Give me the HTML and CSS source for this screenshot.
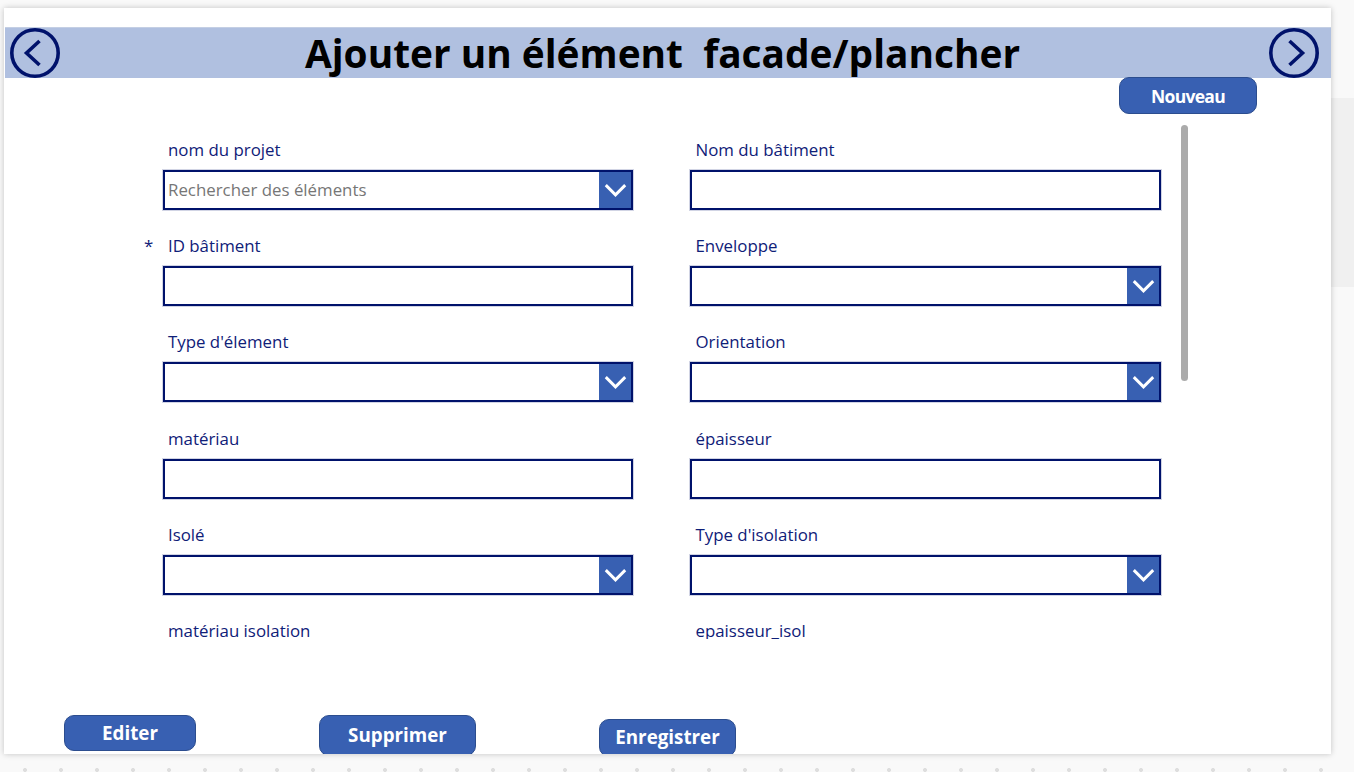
FILE: index.html
```html
<!DOCTYPE html>
<html lang="fr">
<head>
<meta charset="utf-8">
<title>Ajouter un élément facade/plancher</title>
<link rel="stylesheet" href="styles.css">
</head>
<body>
<div class="backdrop-panel"></div>
<div class="dots"></div>
<main class="canvas">
  <header class="titlebar">
    <button class="nav-btn" aria-label="Précédent">
      <svg viewBox="0 0 50 50" width="50" height="50"><circle cx="25" cy="25" r="23.2" class="ring"/><path d="M29.5 13 L16.5 25 L29.5 37" class="ring"/></svg>
    </button>
    <h1 class="title">Ajouter un élément  facade/plancher</h1>
    <button class="nav-btn" aria-label="Suivant">
      <svg viewBox="0 0 50 50" width="50" height="50"><circle cx="25" cy="25" r="23.2" class="ring"/><path d="M20.5 13 L33.5 25 L20.5 37" class="ring"/></svg>
    </button>
  </header>
  <div class="toolbar"><button class="btn btn-new">Nouveau</button></div>
  <section class="form">
    <div class="scrollbar"></div>
    <div class="field">
      <label class="label">nom du projet</label>
      <div class="control"><span class="placeholder">Rechercher des éléments</span><span class="chev"><svg viewBox="0 0 34 34" width="33" height="38"><path d="M7 12 L17 22 L27 12" class="chev-line"/></svg></span></div>
    </div>
    <div class="field field-right">
      <label class="label">Nom du bâtiment</label>
      <div class="control"></div>
    </div>
    <div class="field">
      <label class="label"><span class="star">*</span>ID bâtiment</label>
      <div class="control"></div>
    </div>
    <div class="field field-right">
      <label class="label">Enveloppe</label>
      <div class="control"><span class="chev"><svg viewBox="0 0 34 34" width="33" height="38"><path d="M7 12 L17 22 L27 12" class="chev-line"/></svg></span></div>
    </div>
    <div class="field">
      <label class="label">Type d'élement</label>
      <div class="control"><span class="chev"><svg viewBox="0 0 34 34" width="33" height="38"><path d="M7 12 L17 22 L27 12" class="chev-line"/></svg></span></div>
    </div>
    <div class="field field-right">
      <label class="label">Orientation</label>
      <div class="control"><span class="chev"><svg viewBox="0 0 34 34" width="33" height="38"><path d="M7 12 L17 22 L27 12" class="chev-line"/></svg></span></div>
    </div>
    <div class="field">
      <label class="label">matériau</label>
      <div class="control"></div>
    </div>
    <div class="field field-right">
      <label class="label">épaisseur</label>
      <div class="control"></div>
    </div>
    <div class="field">
      <label class="label">Isolé</label>
      <div class="control"><span class="chev"><svg viewBox="0 0 34 34" width="33" height="38"><path d="M7 12 L17 22 L27 12" class="chev-line"/></svg></span></div>
    </div>
    <div class="field field-right">
      <label class="label">Type d'isolation</label>
      <div class="control"><span class="chev"><svg viewBox="0 0 34 34" width="33" height="38"><path d="M7 12 L17 22 L27 12" class="chev-line"/></svg></span></div>
    </div>
    <div class="field">
      <label class="label">matériau isolation</label>
      <div class="control"></div>
    </div>
    <div class="field field-right">
      <label class="label">epaisseur_isol</label>
      <div class="control"></div>
    </div>
  </section>
  <footer class="actions">
    <button class="btn btn-edit">Editer</button>
    <button class="btn btn-delete">Supprimer</button>
    <button class="btn btn-save">Enregistrer</button>
  </footer>
</main>
</body>
</html>
```
FILE: styles.css
```css
* { box-sizing: border-box; }
html, body { margin: 0; height: 772px; overflow: hidden; }
body {
  position: relative;
  background: #f9f9f9;
  font-family: "Open Sans", sans-serif;
  padding: 8px 0 0 4px;
}
.backdrop-panel {
  position: absolute;
  left: 1331px; top: 98px;
  width: 23px; height: 189px;
  background: #f0f0f0;
}
.dots {
  position: absolute;
  left: 7px; top: 752px;
  width: 1347px; height: 20px;
  background-image: radial-gradient(circle at 18px 18px, #dedede 0, #dedede 1.7px, transparent 2.3px);
  background-size: 36px 36px;
}
.canvas {
  position: relative;
  width: 1327px;
  height: 746px;
  background: #fff;
  overflow: hidden;
  box-shadow: 0 0 6px rgba(0,0,0,.22);
  display: flex;
  flex-direction: column;
}
.titlebar {
  margin: 19px 0 0 1px;
  height: 51px;
  flex: none;
  background: #b0c0e0;
  border-top: 1px solid #c4cfe4;
  display: flex;
  align-items: center;
  justify-content: space-between;
  padding: 0 12px 0 5px;
}
.nav-btn {
  width: 50px; height: 50px;
  padding: 0; border: 0; background: none;
  display: block;
  margin-top: -1px;
}
.nav-btn svg { display: block; }
.ring { fill: none; stroke: #00126b; stroke-width: 3.6; }
.title {
  margin: 0 4px 0 0;
  font-size: 38.85px;
  font-weight: 700;
  line-height: 50px;
  color: #000;
  white-space: pre;
}
.toolbar {
  flex: none;
  height: 36px;
  margin-top: -1px;
  padding-left: 1115px;
  position: relative;
}
.btn {
  display: block;
  background: #3860b2;
  border: 1px solid #2c4d8e;
  border-radius: 10px;
  color: #fff;
  font-family: "Open Sans", sans-serif;
  font-weight: 700;
  font-size: 18.8px;
  padding: 0;
  text-align: center;
}
.btn-new { width: 138px; height: 37px; font-size: 17.5px; letter-spacing: -.7px; }
.form {
  position: relative;
  flex: none;
  height: 526px;
  overflow: hidden;
  padding: 22px 0 0 159px;
  display: grid;
  grid-template-columns: 470px 471px;
  column-gap: 57px;
  grid-template-rows: 96px 96px 97px 96px 96px 40px;
  align-content: start;
}
.scrollbar {
  position: absolute;
  left: 1177px; top: 12px;
  width: 7px; height: 256px;
  background: #ababab;
  border-radius: 4px;
}
.field { display: flex; flex-direction: column; }
.field-right .label { padding-left: 5.5px; }
.label {
  display: block;
  position: relative;
  height: 35px;
  padding: 5px 0 0 5px;
  font-size: 16.85px;
  line-height: 20px;
  color: #0f2078;
  white-space: nowrap;
}
.star { position: absolute; left: -19px; top: 5px; }
.control {
  height: 40px;
  border: 2px solid #00126b;
  box-shadow: 0 0 0 1px rgba(0,18,107,.18);
  background: #fff;
  display: flex;
  align-items: center;
  justify-content: space-between;
}
.placeholder { padding: 0 0 1px 3px; font-size: 16.85px; color: #767676; }
.chev {
  margin-left: auto;
  width: 32px; height: 36px;
  background: #3860b2;
  display: flex; align-items: center; justify-content: center;
}
.chev svg { display: block; flex: none; }
.chev-line { fill: none; stroke: #fff; stroke-width: 3; }
.actions {
  flex: 1;
  position: relative;
  display: flex;
  align-items: flex-start;
  padding-left: 60px;
}
.btn-edit { width: 132px; height: 36px; margin-top: 76px; }
.btn-delete { width: 157px; height: 41px; margin: 76px 0 0 123px; padding-bottom: 2px; }
.btn-save { width: 137px; height: 38px; margin: 80px 0 0 123px; padding-bottom: 2px; }
```
